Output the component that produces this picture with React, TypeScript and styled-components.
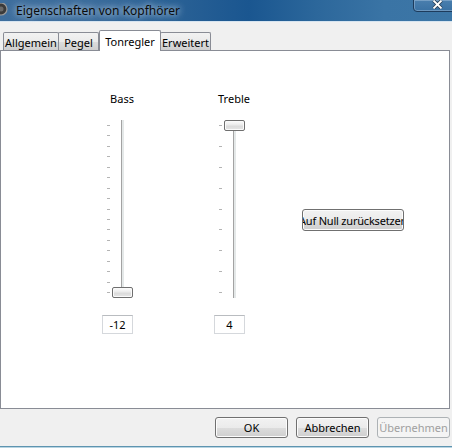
import styled, { createGlobalStyle } from 'styled-components';

const GlobalStyle = createGlobalStyle`
    html, body {
        margin: 0;
        padding: 0;
        background: #f0f0f0;
    }
    body {
        font-family: "Noto Sans", "DejaVu Sans", sans-serif;
        font-size: 11px;
        color: #000;
    }
`;

interface TabProps {
    active?: boolean;
    w: number;
}

interface ThumbProps {
    left: number;
}

const tabs = [
    { label: 'Allgemein', width: 56 },
    { label: 'Pegel', width: 41 },
    { label: 'Tonregler', width: 62, active: true },
    { label: 'Erweitert', width: 51 },
];

const sliders = [
    { label: 'Bass', value: -12, ticks: 17, pos: 1 },
    { label: 'Treble', value: 4, ticks: 9, pos: 0 },
];

const TRACK_HEIGHT = 178;
const THUMB_HEIGHT = 11;

function App() {
    return (
        <Window>
            <GlobalStyle />
            <TitleBar>
                <WindowIcon width="8" height="14" viewBox="0 0 8 14">
                    <circle cx="1" cy="6" r="6" fill="#3a3a3a" stroke="#9a9a9a" strokeWidth="1.2" />
                    <circle cx="1" cy="6" r="2.5" fill="#6a6a6a" />
                </WindowIcon>
                <Title>Eigenschaften von Kopfhörer</Title>
                <CloseButton>
                    <svg width="11" height="9" viewBox="0 0 11 9">
                        <path d="M1.5 0.5 L9.5 8.5 M9.5 0.5 L1.5 8.5" stroke="#2b3f55" strokeWidth="3.4" />
                        <path d="M1.5 0.5 L9.5 8.5 M9.5 0.5 L1.5 8.5" stroke="#fff" strokeWidth="1.8" />
                    </svg>
                </CloseButton>
            </TitleBar>
            <Content>
                <TabStrip>
                    {tabs.map((t) => (
                        <Tab key={t.label} active={t.active} w={t.width}>
                            {t.label}
                        </Tab>
                    ))}
                </TabStrip>
                <Panel>
                    {sliders.map((s) => (
                        <SliderColumn key={s.label}>
                            <SliderLabel>{s.label}</SliderLabel>
                            <SliderArea>
                                <Ticks>
                                    {Array.from({ length: s.ticks }).map((_, i) => (
                                        <Tick key={i} />
                                    ))}
                                </Ticks>
                                <Track />
                                <Thumb
                                    left={12}
                                    style={{ top: s.pos * (TRACK_HEIGHT - THUMB_HEIGHT) }}
                                />
                            </SliderArea>
                            <ValueBox>{s.value}</ValueBox>
                        </SliderColumn>
                    ))}
                    <ResetButton>
                        <span>Auf Null zurücksetzen</span>
                    </ResetButton>
                </Panel>
                <Footer>
                    <DialogButton>OK</DialogButton>
                    <DialogButton>Abbrechen</DialogButton>
                    <DialogButton disabled>Übernehmen</DialogButton>
                </Footer>
            </Content>
        </Window>
    );
}

export default App;

const Window = styled.div`
    width: 452px;
    height: 448px;
    display: flex;
    flex-direction: column;
    overflow: hidden;
    background: #f0f0f0;
`;

const TitleBar = styled.div`
    height: 21px;
    flex: 0 0 21px;
    border-bottom: 1px solid #d6e4f0;
    display: flex;
    align-items: center;
    position: relative;
    background: linear-gradient(
        90deg,
        #3e6e9d 0%,
        #3b6c9c 20%,
        #2a6195 38%,
        #1a5690 55%,
        #2c679b 70%,
        #3a74a5 85%,
        #3c76a6 100%
    );
`;

const WindowIcon = styled.svg`
    flex: 0 0 8px;
    margin-top: -1px;
`;

const Title = styled.span`
    margin-left: 8px;
    font-size: 12px;
    color: #0b0b0b;
    text-shadow: 0 0 6px rgba(220, 235, 250, 0.9), 0 0 10px rgba(220, 235, 250, 0.6);
    white-space: nowrap;
`;

const CloseButton = styled.div`
    position: absolute;
    right: -8px;
    top: -1px;
    width: 47px;
    height: 13px;
    border: 1px solid #1d3b5c;
    border-bottom-left-radius: 4px;
    box-shadow: inset 0 0 0 1px rgba(200, 220, 240, 0.35);
    background: linear-gradient(180deg, #4a7fae 0%, #3a71a3 100%);
    display: flex;
    justify-content: flex-start;
    align-items: flex-start;
    padding-left: 18px;
    box-sizing: border-box;
`;

const Content = styled.div`
    flex: 1;
    display: flex;
    flex-direction: column;
    padding-top: 8px;
`;

const TabStrip = styled.div`
    display: flex;
    align-items: flex-end;
    height: 21px;
    padding-left: 3px;
    margin-bottom: -1px;
    position: relative;
    z-index: 1;
`;

const Tab = styled.div<TabProps>`
    box-sizing: border-box;
    width: ${(p) => p.w}px;
    height: ${(p) => (p.active ? 21 : 18)}px;
    margin-bottom: ${(p) => (p.active ? 0 : 1)}px;
    margin-left: ${(p) => (p.active ? 0 : -1)}px;
    border: 1px solid #898c95;
    border-bottom: none;
    border-radius: 2px 2px 0 0;
    background: ${(p) =>
        p.active ? '#ffffff' : 'linear-gradient(180deg, #f2f2f2 0%, #ebebeb 50%, #dddddd 51%, #cfcfcf 100%)'};
    display: flex;
    align-items: center;
    justify-content: center;
    padding-top: ${(p) => (p.active ? 0 : 1)}px;
    font-size: 11px;
    white-space: nowrap;
    position: relative;
    z-index: ${(p) => (p.active ? 2 : 1)};
    &:first-child {
        margin-left: 0;
    }
`;

const Panel = styled.div`
    box-sizing: border-box;
    width: 450px;
    height: 359px;
    flex: 0 0 359px;
    background: #fff;
    border: 1px solid #898c95;
    display: flex;
    align-items: flex-start;
    padding: 41px 0 0 99px;
    gap: 68px;
`;

const SliderColumn = styled.div`
    width: 44px;
    display: flex;
    flex-direction: column;
`;

const SliderLabel = styled.div`
    height: 14px;
    line-height: 14px;
    text-align: center;
    font-size: 11px;
`;

const SliderArea = styled.div`
    position: relative;
    height: ${TRACK_HEIGHT}px;
    margin-top: 14px;
    display: flex;
    padding-left: 7px;
`;

const Ticks = styled.div`
    width: 3px;
    margin-right: 11px;
    padding: 5px 0;
    display: flex;
    flex-direction: column;
    justify-content: space-between;
`;

const Tick = styled.div`
    height: 1px;
    background: #b4b4b4;
`;

const Track = styled.div`
    width: 2px;
    border-left: 1px solid #a3a3a3;
    background: #e4e8e8;
`;

const Thumb = styled.div<ThumbProps>`
    position: absolute;
    left: ${(p) => p.left}px;
    box-sizing: border-box;
    width: 21px;
    height: ${THUMB_HEIGHT}px;
    border: 1px solid #6f6f6f;
    border-radius: 2px;
    background: linear-gradient(180deg, #fbfbfb 0%, #f0f0f0 35%, #dcdcdc 60%, #e6e6e6 100%);
    box-shadow: inset 0 0 0 1px #fafafa;
`;

const ValueBox = styled.div`
    box-sizing: border-box;
    width: 31px;
    height: 19px;
    margin: 17px 0 0 2px;
    border: 1px solid #d5d8dc;
    border-top-color: #b9bcc0;
    display: flex;
    align-items: center;
    justify-content: center;
    font-size: 11px;
`;

const ResetButton = styled.div`
    box-sizing: border-box;
    width: 102px;
    height: 22px;
    margin: 117px 0 0 -22px;
    border: 1px solid #707070;
    border-radius: 3px;
    background: linear-gradient(180deg, #f2f2f2 0%, #ebebeb 50%, #dddddd 51%, #cfcfcf 100%);
    box-shadow: inset 0 0 0 1px #fcfcfc;
    display: flex;
    justify-content: center;
    align-items: center;
    overflow: hidden;
    white-space: nowrap;
    font-size: 11px;
    letter-spacing: -0.2px;

    span {
        flex: 0 0 auto;
    }
`;

const Footer = styled.div`
    flex: 1;
    display: flex;
    justify-content: flex-end;
    align-items: flex-start;
    gap: 8px;
    padding: 8px 2px 0 0;
    border-bottom: 1px solid #5e94b0;
    box-shadow: 0 1px 0 #b9d5e2;
    margin-bottom: 1px;
`;

const DialogButton = styled.button`
    box-sizing: border-box;
    width: 73px;
    height: 21px;
    padding: 0;
    font-family: inherit;
    font-size: 11px;
    color: #000;
    border: 1px solid #707070;
    border-radius: 3px;
    background: linear-gradient(180deg, #f2f2f2 0%, #ebebeb 50%, #dddddd 51%, #cfcfcf 100%);
    box-shadow: inset 0 0 0 1px #fcfcfc;

    &:disabled {
        color: #a0a0a0;
        border-color: #adb2b5;
        background: #f4f4f4;
        box-shadow: none;
    }
`;
